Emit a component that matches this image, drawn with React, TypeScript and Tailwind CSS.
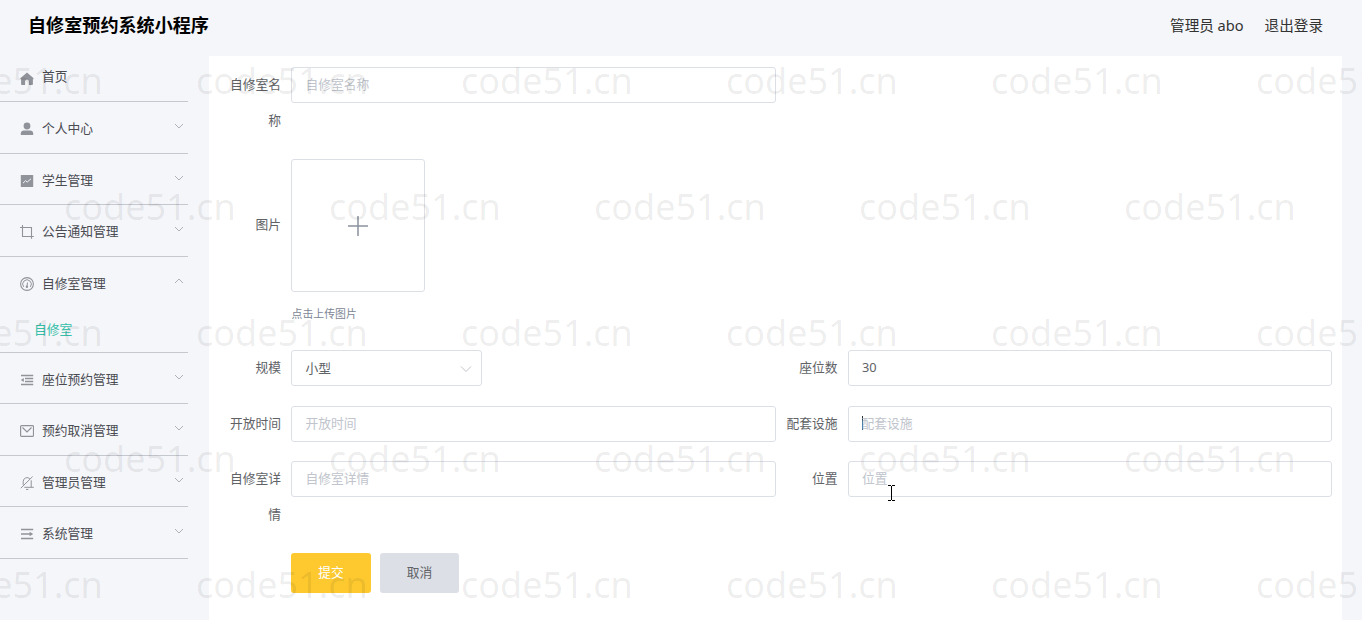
import type { ReactNode } from "react";

const solid = { fill: "currentColor", stroke: "none" };

const icons: Record<string, ReactNode> = {
  home: <path {...solid} d="M7 .6 13.300 6c.5.500.3 1.300-.4 1.300V12c0 .600-.4 1-1 1H8.900V9.400a1.900 1.900 0 0 0-3.800 0V13h-3c-.6 0-1-.4-1-1V7.300C.4 7.300.2 6.500.7 6z" />,
  user: (
    <g {...solid}>
      <circle cx="7" cy="4" r="3.4" />
      <path d="M.8 13v-1.600c0-1.700 1.300-3 3-3h6.400c1.700 0 3 1.300 3 3V13z" />
    </g>
  ),
  chart: (
    <>
      <rect {...solid} x=".8" y="1" width="12.400" height="12" rx=".6" />
      <path d="M3 9.200 5.600 6.700l1.700 1.300L11 4.800" stroke="#f5f6fa" />
    </>
  ),
  crop: <path strokeWidth="1.100" d="M2.500 0v11.500h11.300M0 2.500h11.500v11.300" />,
  meter: (
    <>
      <circle cx="7" cy="7" r="6.400" strokeWidth="1.100" />
      <path d="M3.700 9.900a4.300 4.300 0 1 1 6.600 0M7.500 5.500 7 9" />
      <circle {...solid} cx="6.900" cy="9.700" r="1.200" />
    </>
  ),
  fold: (
    <>
      <path d="M1 2.500h12.200M5 5.500h8.200M5 8.500h8.200M1 11.500h12.200" strokeWidth="1.400" />
      <path {...solid} d="M.8 7 3.800 5v4z" />
    </>
  ),
  unfold: (
    <>
      <path d="M1 2.500h12.200M1 7h9.200M1 11.500h12.200" strokeWidth="1.700" />
      <path {...solid} d="M13.200 7 9.600 4.800v4.400z" />
    </>
  ),
  mail: (
    <>
      <rect x=".6" y="1.600" width="12.900" height="10.800" rx="1" strokeWidth="1.200" />
      <path strokeWidth="1.200" d="M2.500 3.500 7 8l4.500-4.500" />
    </>
  ),
  mute: <path d="M.8 12.200 12.600.6M3.200 8.800V5.500a3.900 3.900 0 0 1 6.600-2.800M11.200 4.300v7M4.300 11.300h9.500M6 13.400h2.400" />,
};

function Icon({ name }: { name: string }) {
  return (
    <svg viewBox="0 0 14 14" className="h-3.5 w-3.5 shrink-0 text-[#909399]" fill="none" stroke="currentColor">
      {icons[name]}
    </svg>
  );
}

function Chevron({ up = false }: { up?: boolean }) {
  return (
    <svg viewBox="0 0 10 6" className="h-1.5 w-2.5 shrink-0 text-[#a6a9b0]" fill="none" stroke="currentColor" strokeWidth=".9">
      <path d={up ? "M1 5 5 1l4 4" : "M1 1l4 4 4-4"} />
    </svg>
  );
}

type Item = { label: string; icon: string; size: string; child?: string };

const menu: Item[] = [
  { label: "个人中心", icon: "user", size: "h-[52px]" },
  { label: "学生管理", icon: "chart", size: "h-[51px]" },
  { label: "公告通知管理", icon: "crop", size: "h-[52px]" },
  { label: "自修室管理", icon: "meter", size: "h-[96px]", child: "自修室" },
  { label: "座位预约管理", icon: "fold", size: "h-[51px]" },
  { label: "预约取消管理", icon: "mail", size: "h-[52px]" },
  { label: "管理员管理", icon: "mute", size: "h-[51px]" },
  { label: "系统管理", icon: "unfold", size: "h-[52px]" },
];

function Sidebar() {
  return (
    <nav className="w-[188px] shrink-0 text-[#4a4c52]">
      <div className="flex h-[46px] items-center border-b border-[#c5c8cf] pl-5">
        <span className="pt-[1px]"><Icon name="home" /></span>
        <span className="ml-2 pb-[5px]">首页</span>
      </div>
      {menu.map((m) => (
        <div key={m.label} className={`border-b border-[#c5c8cf] ${m.size}`}>
          <div className="flex h-[51px] items-center pl-5 pr-1">
            <span className="pt-[2px]"><Icon name={m.icon} /></span>
            <span className="ml-2 flex-1 pt-[1px]">{m.label}</span>
            <span className="pb-[3px]"><Chevron up={!!m.child} /></span>
          </div>
          {m.child && <div className="pl-[34px] leading-[42px] text-[#36bfa9]"><span>{m.child}</span></div>}
        </div>
      ))}
    </nav>
  );
}

function Field({ label, children }: { label: string; children: ReactNode }) {
  return (
    <div className="flex min-w-0 flex-1 items-start">
      <label className="-mt-px w-[72px] shrink-0 pr-2.5 text-right leading-9 text-[#606266]">{label}</label>
      {children}
    </div>
  );
}

function Box({ value, placeholder, caret }: { value?: string; placeholder?: string; caret?: boolean }) {
  return (
    <div className={`flex h-9 flex-1 items-center rounded-[3px] border border-[#dcdfe6] pb-[3px] text-[#606266] ${caret ? "pl-[13px]" : "pl-[13.500px]"}`}>
      {caret && <span className="-mr-px h-3.5 w-px bg-[#303133]" />}
      {value ? <span>{value}</span> : <span className="text-[#c0c4cc]">{placeholder}</span>}
    </div>
  );
}

const even = [-69, 196, 461, 726, 991, 1256];
const odd = [64, 329, 594, 859, 1124];
const marks = [0, 1, 2, 3, 4].flatMap((r) => (r % 2 ? odd : even).map((x) => ({ x, y: 57 + r * 126 })));

function Watermark() {
  return (
    <div className="pointer-events-none absolute inset-0 overflow-hidden">
      {marks.map((m) => (
        <span key={`${m.x}-${m.y}`} className="absolute text-[36px] leading-[48px] text-black/8" style={{ left: m.x, top: m.y }}>
          code51.cn
        </span>
      ))}
    </div>
  );
}

export default function App() {
  return (
    <div className="relative flex h-[620px] w-[1362px] flex-col overflow-hidden bg-[#f5f6fa] font-['Noto_Sans','Noto_Sans_CJK_SC',sans-serif] text-[12.75px] leading-5">
      <header className="flex h-14 shrink-0 items-center justify-between pb-[7px] pl-7 pr-[39px]">
        <h1 className="text-[18.1px] font-bold text-black">自修室预约系统小程序</h1>
        <div className="flex gap-[21px] text-[14.6px] text-[#333]">
          <span>管理员 abo</span>
          <span>退出登录</span>
        </div>
      </header>
      <div className="flex flex-1">
        <Sidebar />
        <main className="ml-[21px] mr-5 flex-1 bg-white px-2.5 pt-[11px]">
          <div className="mb-5 flex h-[72px]">
            <Field label="自修室名称"><Box placeholder="自修室名称" /></Field>
            <div className="flex-1" />
          </div>
          <div className="flex h-[133px]">
            <label className="w-[72px] pr-2.5 text-right leading-[130px] text-[#606266]">图片</label>
            <div className="flex w-[134px] items-center justify-center rounded-[3px] border border-[#dcdfe6]">
              <svg viewBox="0 0 22 22" className="h-[22px] w-[22px] text-[#8c939d]" fill="none" stroke="currentColor" strokeWidth="1.500">
                <path d="M11 1v20M1 11h20" />
              </svg>
            </div>
          </div>
          <div className="h-[58px] pl-[72.500px] pt-[12px] text-[10.9px] text-[#7d8694]">点击上传图片</div>
          <div className="mb-5 flex h-9">
            <Field label="规模">
              <div className="flex h-9 w-[191px] items-center justify-between rounded-[3px] border border-[#dcdfe6] pl-[13.500px] pr-[9px] text-[#606266]">
                <span className="pb-px">小型</span>
                <svg viewBox="0 0 12 8" className="mt-[2px] h-2 w-3 text-[#c0c4cc]" fill="none" stroke="currentColor">
                  <path d="M1 1.500 6 6.500l5-5" />
                </svg>
              </div>
            </Field>
            <Field label="座位数"><Box value="30" /></Field>
          </div>
          <div className="mb-[19px] flex h-9">
            <Field label="开放时间"><Box placeholder="开放时间" /></Field>
            <Field label="配套设施"><Box placeholder="配套设施" caret /></Field>
          </div>
          <div className="mb-5 flex h-[72px]">
            <Field label="自修室详情"><Box placeholder="自修室详情" /></Field>
            <Field label="位置"><Box placeholder="位置" /></Field>
          </div>
          <div className="flex gap-[9px] pl-[72px]">
            <button className="h-10 w-20 rounded-[3px] bg-[#fdc92f] pb-[3px] text-white">提交</button>
            <button className="h-10 w-[79px] rounded-[3px] bg-[#dcdfe6] pb-[3px] text-[#606266]">取消</button>
          </div>
        </main>
      </div>
      <Watermark />
      <svg viewBox="0 0 7 16" className="absolute left-[888px] top-[485px] h-4 w-[7px]" fill="none" stroke="black" shapeRendering="crispEdges">
        <path d="M0 .5h3M4 .5h3M3.500 1v14M0 15.500h3M4 15.500h3" />
      </svg>
    </div>
  );
}
